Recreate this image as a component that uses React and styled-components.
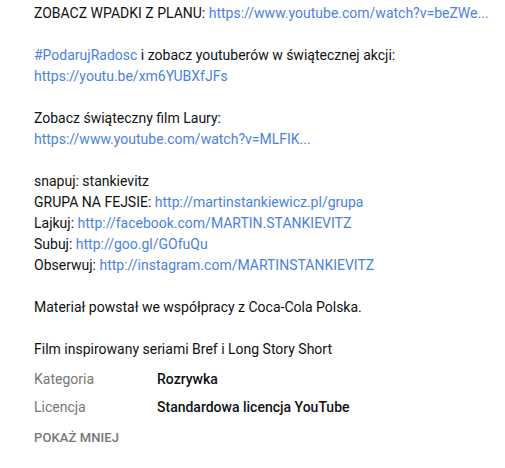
import React from "react";
import styled, { createGlobalStyle } from "styled-components";

const Global = createGlobalStyle`
  html, body { margin: 0; padding: 0; background: #fff; }
  body { font-family: Roboto, "Noto Sans", Arial, sans-serif; -webkit-font-smoothing: antialiased; }
`;

const Page = styled.div`
  width: 505px;
  height: 468px;
  box-sizing: border-box;
  padding: 3px 0 0 34px;
  background: #fff;
  overflow: hidden;
`;

const Description = styled.div`
  font-size: 14px;
  line-height: 21px;
  color: #111;
  white-space: pre-wrap;
`;

const Link = styled.a`
  color: #4b82e0;
  text-decoration: none;
`;

const Meta = styled.div`
  display: flex;
  flex-direction: column;
  gap: 8px;
  margin-top: 9px;
`;

const MetaRow = styled.div`
  display: grid;
  grid-template-columns: 123px 1fr;
  font-size: 14px;
  line-height: 20px;
`;

const MetaLabel = styled.span`
  color: #767676;
`;

const MetaValue = styled.span`
  color: #111;
  font-weight: 500;
`;

const ShowLess = styled.button`
  margin-top: 12px;
  padding: 0;
  border: 0;
  background: none;
  font-family: inherit;
  font-size: 13px;
  line-height: 18px;
  font-weight: 500;
  color: #767676;
  text-transform: uppercase;
  letter-spacing: 0.1px;
  cursor: pointer;
`;

export default function App() {
  return (
    <>
      <Global />
      <Page>
        <Description>
          {"ZOBACZ WPADKI Z PLANU: "}
          <Link>https://www.youtube.com/watch?v=beZWe...</Link>
          {"\n\n"}
          <Link>#PodarujRadosc</Link>
          {" i zobacz youtuberów w świątecznej akcji:\n"}
          <Link>https://youtu.be/xm6YUBXfJFs</Link>
          {"\n\nZobacz świąteczny film Laury:\n"}
          <Link>https://www.youtube.com/watch?v=MLFIK...</Link>
          {"\n\nsnapuj: stankievitz\nGRUPA NA FEJSIE: "}
          <Link>http://martinstankiewicz.pl/grupa</Link>
          {"\nLajkuj: "}
          <Link>http://facebook.com/MARTIN.STANKIEVITZ</Link>
          {"\nSubuj: "}
          <Link>http://goo.gl/GOfuQu</Link>
          {"\nObserwuj: "}
          <Link>http://instagram.com/MARTINSTANKIEVITZ</Link>
          {"\n\nMateriał powstał we współpracy z Coca-Cola Polska.\n\nFilm inspirowany seriami Bref i Long Story Short"}
        </Description>
        <Meta>
          <MetaRow>
            <MetaLabel>Kategoria</MetaLabel>
            <MetaValue>Rozrywka</MetaValue>
          </MetaRow>
          <MetaRow>
            <MetaLabel>Licencja</MetaLabel>
            <MetaValue>Standardowa licencja YouTube</MetaValue>
          </MetaRow>
        </Meta>
        <ShowLess>Pokaż mniej</ShowLess>
      </Page>
    </>
  );
}
